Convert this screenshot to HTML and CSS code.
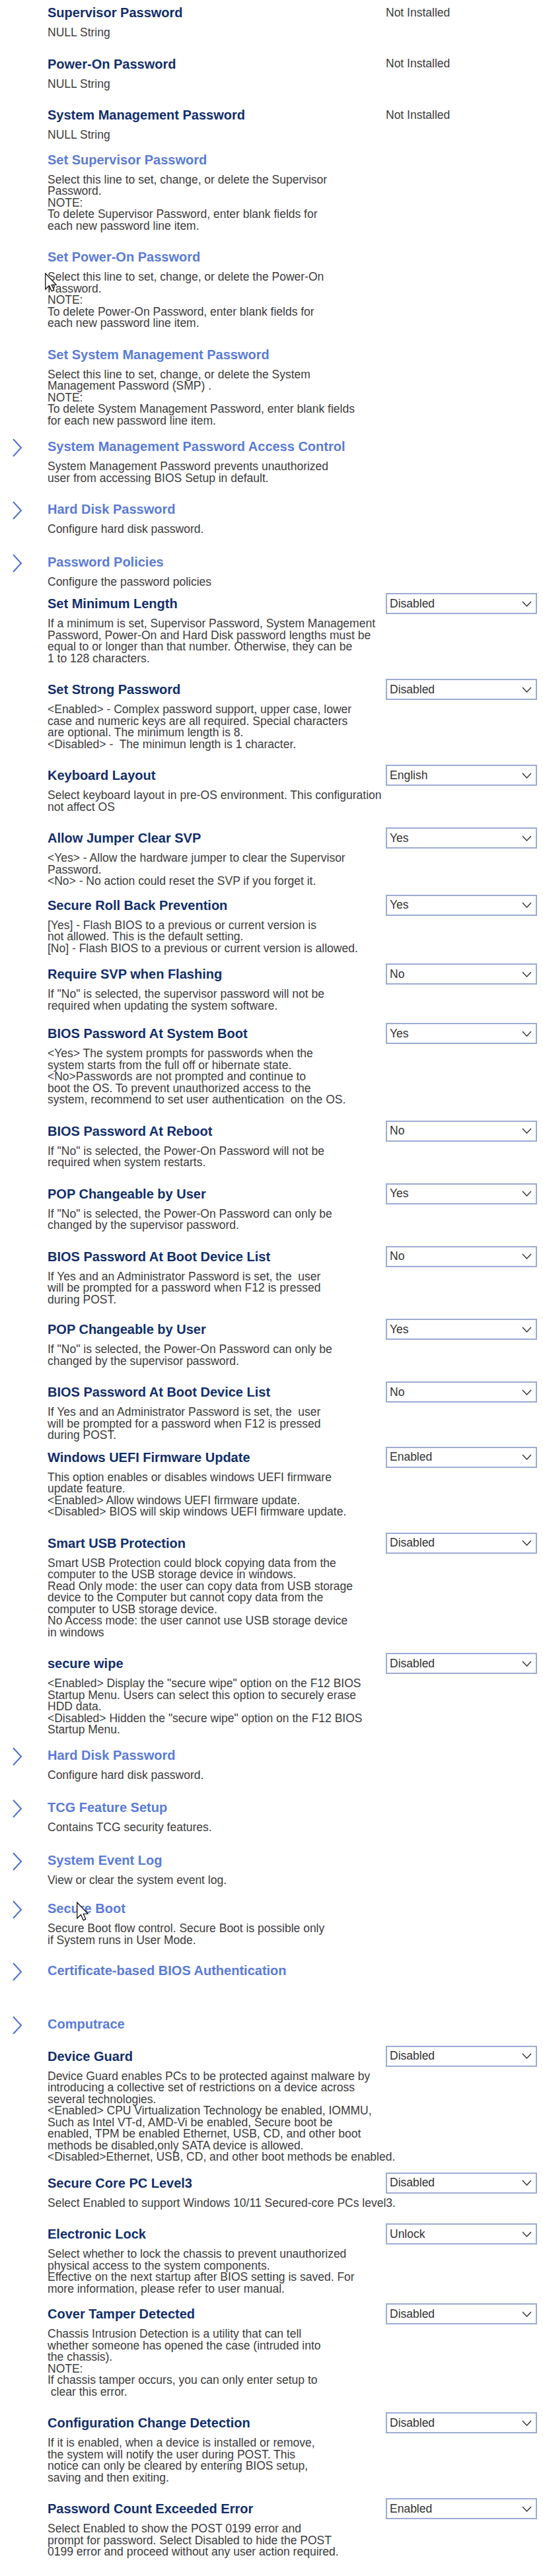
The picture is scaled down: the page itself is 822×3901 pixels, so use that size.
FILE: index.html
```html
<!DOCTYPE html>
<html lang="en">
<head>
<meta charset="utf-8">
<title>Security</title>
<link rel="stylesheet" href="styles.css">
</head>
<body>
<main class="page">

<section class="item">
  <div class="head"><span class="gutter"></span><h3 class="title">Supervisor Password</h3><span class="value">Not Installed</span></div>
  <p class="desc">NULL String</p>
</section>

<section class="item">
  <div class="head"><span class="gutter"></span><h3 class="title">Power-On Password</h3><span class="value">Not Installed</span></div>
  <p class="desc">NULL String</p>
</section>

<section class="item gap-12">
  <div class="head"><span class="gutter"></span><h3 class="title">System Management Password</h3><span class="value">Not Installed</span></div>
  <p class="desc">NULL String</p>
</section>

<section class="item">
  <div class="head"><span class="gutter"></span><h3 class="title link">Set Supervisor Password</h3></div>
  <p class="desc">Select this line to set, change, or delete the Supervisor
Password.
NOTE:
To delete Supervisor Password, enter blank fields for
each new password line item.</p>
</section>

<section class="item">
  <div class="head"><span class="gutter"></span><h3 class="title link">Set Power-On Password</h3></div>
  <p class="desc">Select this line to set, change, or delete the Power-On
Password.
NOTE:
To delete Power-On Password, enter blank fields for
each new password line item.</p>
</section>

<section class="item gap-14">
  <div class="head"><span class="gutter"></span><h3 class="title link">Set System Management Password</h3></div>
  <p class="desc">Select this line to set, change, or delete the System
Management Password (SMP) .
NOTE:
To delete System Management Password, enter blank fields
for each new password line item.</p>
</section>

<section class="item">
  <div class="head"><span class="gutter"><svg class="chev" viewBox="0 0 16 28"><polyline points="2,1 14,14 2,27"/></svg></span><h3 class="title link">System Management Password Access Control</h3></div>
  <p class="desc">System Management Password prevents unauthorized
user from accessing BIOS Setup in default.</p>
</section>

<section class="item gap-24">
  <div class="head"><span class="gutter"><svg class="chev" viewBox="0 0 16 28"><polyline points="2,1 14,14 2,27"/></svg></span><h3 class="title link">Hard Disk Password</h3></div>
  <p class="desc">Configure hard disk password.</p>
</section>

<section class="item gap-8">
  <div class="head"><span class="gutter"><svg class="chev" viewBox="0 0 16 28"><polyline points="2,1 14,14 2,27"/></svg></span><h3 class="title link">Password Policies</h3></div>
  <p class="desc">Configure the password policies</p>
</section>

<section class="item">
  <div class="head"><span class="gutter"></span><h3 class="title">Set Minimum Length</h3><div class="select"><span>Disabled</span><svg class="caret" viewBox="0 0 15 9"><polyline points="1,1 7.5,8 14,1"/></svg></div></div>
  <p class="desc">If a minimum is set, Supervisor Password, System Management
Password, Power-On and Hard Disk password lengths must be
equal to or longer than that number. Otherwise, they can be
1 to 128 characters.</p>
</section>

<section class="item">
  <div class="head"><span class="gutter"></span><h3 class="title">Set Strong Password</h3><div class="select"><span>Disabled</span><svg class="caret" viewBox="0 0 15 9"><polyline points="1,1 7.5,8 14,1"/></svg></div></div>
  <p class="desc">&lt;Enabled&gt; - Complex password support, upper case, lower
case and numeric keys are all required. Special characters
are optional. The minimum length is 8.
&lt;Disabled&gt; -  The minimun length is 1 character.</p>
</section>

<section class="item">
  <div class="head"><span class="gutter"></span><h3 class="title">Keyboard Layout</h3><div class="select"><span>English</span><svg class="caret" viewBox="0 0 15 9"><polyline points="1,1 7.5,8 14,1"/></svg></div></div>
  <p class="desc">Select keyboard layout in pre-OS environment. This configuration
not affect OS</p>
</section>

<section class="item gap-11">
  <div class="head"><span class="gutter"></span><h3 class="title">Allow Jumper Clear SVP</h3><div class="select"><span>Yes</span><svg class="caret" viewBox="0 0 15 9"><polyline points="1,1 7.5,8 14,1"/></svg></div></div>
  <p class="desc">&lt;Yes&gt; - Allow the hardware jumper to clear the Supervisor
Password.
&lt;No&gt; - No action could reset the SVP if you forget it.</p>
</section>

<section class="item gap-14">
  <div class="head"><span class="gutter"></span><h3 class="title">Secure Roll Back Prevention</h3><div class="select"><span>Yes</span><svg class="caret" viewBox="0 0 15 9"><polyline points="1,1 7.5,8 14,1"/></svg></div></div>
  <p class="desc">[Yes] - Flash BIOS to a previous or current version is
not allowed. This is the default setting.
[No] - Flash BIOS to a previous or current version is allowed.</p>
</section>

<section class="item gap-17">
  <div class="head"><span class="gutter"></span><h3 class="title">Require SVP when Flashing</h3><div class="select"><span>No</span><svg class="caret" viewBox="0 0 15 9"><polyline points="1,1 7.5,8 14,1"/></svg></div></div>
  <p class="desc">If "No" is selected, the supervisor password will not be
required when updating the system software.</p>
</section>

<section class="item">
  <div class="head"><span class="gutter"></span><h3 class="title">BIOS Password At System Boot</h3><div class="select"><span>Yes</span><svg class="caret" viewBox="0 0 15 9"><polyline points="1,1 7.5,8 14,1"/></svg></div></div>
  <p class="desc">&lt;Yes&gt; The system prompts for passwords when the
system starts from the full off or hibernate state.
&lt;No&gt;Passwords are not prompted and continue to
boot the OS. To prevent unauthorized access to the
system, recommend to set user authentication  on the OS.</p>
</section>

<section class="item">
  <div class="head"><span class="gutter"></span><h3 class="title">BIOS Password At Reboot</h3><div class="select"><span>No</span><svg class="caret" viewBox="0 0 15 9"><polyline points="1,1 7.5,8 14,1"/></svg></div></div>
  <p class="desc">If "No" is selected, the Power-On Password will not be
required when system restarts.</p>
</section>

<section class="item">
  <div class="head"><span class="gutter"></span><h3 class="title">POP Changeable by User</h3><div class="select"><span>Yes</span><svg class="caret" viewBox="0 0 15 9"><polyline points="1,1 7.5,8 14,1"/></svg></div></div>
  <p class="desc">If "No" is selected, the Power-On Password can only be
changed by the supervisor password.</p>
</section>

<section class="item gap-20">
  <div class="head"><span class="gutter"></span><h3 class="title">BIOS Password At Boot Device List</h3><div class="select"><span>No</span><svg class="caret" viewBox="0 0 15 9"><polyline points="1,1 7.5,8 14,1"/></svg></div></div>
  <p class="desc">If Yes and an Administrator Password is set, the  user
will be prompted for a password when F12 is pressed
during POST.</p>
</section>

<section class="item">
  <div class="head"><span class="gutter"></span><h3 class="title">POP Changeable by User</h3><div class="select"><span>Yes</span><svg class="caret" viewBox="0 0 15 9"><polyline points="1,1 7.5,8 14,1"/></svg></div></div>
  <p class="desc">If "No" is selected, the Power-On Password can only be
changed by the supervisor password.</p>
</section>

<section class="item gap-8">
  <div class="head"><span class="gutter"></span><h3 class="title">BIOS Password At Boot Device List</h3><div class="select"><span>No</span><svg class="caret" viewBox="0 0 15 9"><polyline points="1,1 7.5,8 14,1"/></svg></div></div>
  <p class="desc">If Yes and an Administrator Password is set, the  user
will be prompted for a password when F12 is pressed
during POST.</p>
</section>

<section class="item">
  <div class="head"><span class="gutter"></span><h3 class="title">Windows UEFI Firmware Update</h3><div class="select"><span>Enabled</span><svg class="caret" viewBox="0 0 15 9"><polyline points="1,1 7.5,8 14,1"/></svg></div></div>
  <p class="desc">This option enables or disables windows UEFI firmware
update feature.
&lt;Enabled&gt; Allow windows UEFI firmware update.
&lt;Disabled&gt; BIOS will skip windows UEFI firmware update.</p>
</section>

<section class="item">
  <div class="head"><span class="gutter"></span><h3 class="title">Smart USB Protection</h3><div class="select"><span>Disabled</span><svg class="caret" viewBox="0 0 15 9"><polyline points="1,1 7.5,8 14,1"/></svg></div></div>
  <p class="desc">Smart USB Protection could block copying data from the
computer to the USB storage device in windows.
Read Only mode: the user can copy data from USB storage
device to the Computer but cannot copy data from the
computer to USB storage device.
No Access mode: the user cannot use USB storage device
in windows</p>
</section>

<section class="item gap-13">
  <div class="head"><span class="gutter"></span><h3 class="title">secure wipe</h3><div class="select"><span>Disabled</span><svg class="caret" viewBox="0 0 15 9"><polyline points="1,1 7.5,8 14,1"/></svg></div></div>
  <p class="desc">&lt;Enabled&gt; Display the "secure wipe" option on the F12 BIOS
Startup Menu. Users can select this option to securely erase
HDD data.
&lt;Disabled&gt; Hidden the "secure wipe" option on the F12 BIOS
Startup Menu.</p>
</section>

<section class="item gap-24">
  <div class="head"><span class="gutter"><svg class="chev" viewBox="0 0 16 28"><polyline points="2,1 14,14 2,27"/></svg></span><h3 class="title link">Hard Disk Password</h3></div>
  <p class="desc">Configure hard disk password.</p>
</section>

<section class="item gap-24">
  <div class="head"><span class="gutter"><svg class="chev" viewBox="0 0 16 28"><polyline points="2,1 14,14 2,27"/></svg></span><h3 class="title link">TCG Feature Setup</h3></div>
  <p class="desc">Contains TCG security features.</p>
</section>

<section class="item gap-18">
  <div class="head"><span class="gutter"><svg class="chev" viewBox="0 0 16 28"><polyline points="2,1 14,14 2,27"/></svg></span><h3 class="title link">System Event Log</h3></div>
  <p class="desc">View or clear the system event log.</p>
</section>

<section class="item gap-21">
  <div class="head"><span class="gutter"><svg class="chev" viewBox="0 0 16 28"><polyline points="2,1 14,14 2,27"/></svg></span><h3 class="title link">Secure Boot</h3></div>
  <p class="desc">Secure Boot flow control. Secure Boot is possible only
if System runs in User Mode.</p>
</section>

<section class="item gap-25">
  <div class="head"><span class="gutter"><svg class="chev" viewBox="0 0 16 28"><polyline points="2,1 14,14 2,27"/></svg></span><h3 class="title link">Certificate-based BIOS Authentication</h3></div>
  <p class="desc desc-empty"></p>
</section>

<section class="item gap-17">
  <div class="head"><span class="gutter"><svg class="chev" viewBox="0 0 16 28"><polyline points="2,1 14,14 2,27"/></svg></span><h3 class="title link">Computrace</h3></div>
</section>

<section class="item gap-14">
  <div class="head"><span class="gutter"></span><h3 class="title">Device Guard</h3><div class="select"><span>Disabled</span><svg class="caret" viewBox="0 0 15 9"><polyline points="1,1 7.5,8 14,1"/></svg></div></div>
  <p class="desc">Device Guard enables PCs to be protected against malware by
introducing a collective set of restrictions on a device across
several technologies.
&lt;Enabled&gt; CPU Virtualization Technology be enabled, IOMMU,
Such as Intel VT-d, AMD-Vi be enabled, Secure boot be
enabled, TPM be enabled Ethernet, USB, CD, and other boot
methods be disabled,only SATA device is allowed.
&lt;Disabled&gt;Ethernet, USB, CD, and other boot methods be enabled.</p>
</section>

<section class="item">
  <div class="head"><span class="gutter"></span><h3 class="title">Secure Core PC Level3</h3><div class="select"><span>Disabled</span><svg class="caret" viewBox="0 0 15 9"><polyline points="1,1 7.5,8 14,1"/></svg></div></div>
  <p class="desc">Select Enabled to support Windows 10/11 Secured-core PCs level3.</p>
</section>

<section class="item gap-13">
  <div class="head"><span class="gutter"></span><h3 class="title">Electronic Lock</h3><div class="select"><span>Unlock</span><svg class="caret" viewBox="0 0 15 9"><polyline points="1,1 7.5,8 14,1"/></svg></div></div>
  <p class="desc">Select whether to lock the chassis to prevent unauthorized
physical access to the system components.
Effective on the next startup after BIOS setting is saved. For
more information, please refer to user manual.</p>
</section>

<section class="item">
  <div class="head"><span class="gutter"></span><h3 class="title">Cover Tamper Detected</h3><div class="select"><span>Disabled</span><svg class="caret" viewBox="0 0 15 9"><polyline points="1,1 7.5,8 14,1"/></svg></div></div>
  <p class="desc">Chassis Intrusion Detection is a utility that can tell
whether someone has opened the case (intruded into
the chassis).
NOTE:
If chassis tamper occurs, you can only enter setup to
 clear this error.</p>
</section>

<section class="item">
  <div class="head"><span class="gutter"></span><h3 class="title">Configuration Change Detection</h3><div class="select"><span>Disabled</span><svg class="caret" viewBox="0 0 15 9"><polyline points="1,1 7.5,8 14,1"/></svg></div></div>
  <p class="desc">If it is enabled, when a device is installed or remove,
the system will notify the user during POST. This
notice can only be cleared by entering BIOS setup,
saving and then exiting.</p>
</section>

<section class="item">
  <div class="head"><span class="gutter"></span><h3 class="title">Password Count Exceeded Error</h3><div class="select"><span>Enabled</span><svg class="caret" viewBox="0 0 15 9"><polyline points="1,1 7.5,8 14,1"/></svg></div></div>
  <p class="desc">Select Enabled to show the POST 0199 error and
prompt for password. Select Disabled to hide the POST
0199 error and proceed without any user action required.</p>
</section>

<svg class="cursor cursor-1" viewBox="0 0 12 19"><path d="M0.5,0.5 L0.5,16.5 L4.3,12.9 L6.8,18.5 L9.2,17.4 L6.8,12 L11.5,12 Z"/></svg>
<svg class="cursor cursor-2" viewBox="0 0 12 19"><path d="M0.5,0.5 L0.5,16.5 L4.3,12.9 L6.8,18.5 L9.2,17.4 L6.8,12 L11.5,12 Z"/></svg>

</main>
</body>
</html>
```

FILE: styles.css
```css
html, body {
  margin: 0;
  padding: 0;
  background: #ffffff;
}

body {
  font-family: "Liberation Sans", Arial, Helvetica, sans-serif;
  color: #3c3c3c;
}

.page {
  position: relative;
  width: 822px;
  padding-top: 3px;
  padding-bottom: 20px;
}

.item {
  display: flex;
  flex-direction: column;
  padding-bottom: 22px;
}

.gap-8 { padding-bottom: 8px; }
.gap-11 { padding-bottom: 11px; }
.gap-12 { padding-bottom: 12px; }
.gap-13 { padding-bottom: 13px; }
.gap-14 { padding-bottom: 14px; }
.gap-17 { padding-bottom: 17px; }
.gap-18 { padding-bottom: 18px; }
.gap-20 { padding-bottom: 20px; }
.gap-21 { padding-bottom: 21px; }
.gap-24 { padding-bottom: 24px; }
.gap-25 { padding-bottom: 25px; }

.head {
  display: flex;
  align-items: center;
  height: 32px;
  padding-right: 9px;
}

.gutter {
  width: 72px;
  flex: 0 0 72px;
  display: flex;
  align-items: center;
  padding-left: 18px;
  box-sizing: border-box;
}

.chev {
  width: 16px;
  height: 28px;
  margin-top: 4px;
  fill: none;
  stroke: #4f70d0;
  stroke-width: 2;
}

.title {
  flex: 1;
  margin: 0;
  font-size: 20px;
  font-weight: bold;
  line-height: 32px;
  color: #112e6b;
  white-space: nowrap;
}

.title.link {
  color: #5a7bd6;
}

.value {
  width: 229px;
  font-size: 17.5px;
  color: #3c3c3c;
}

.select {
  box-sizing: border-box;
  width: 229px;
  height: 32px;
  border: 2px solid #9dabd4;
  display: flex;
  align-items: center;
  justify-content: space-between;
  padding: 0 6px 0 4px;
  font-size: 17.5px;
  color: #333333;
  background: #ffffff;
}

.caret {
  width: 15px;
  height: 9px;
  fill: none;
  stroke: #333333;
  stroke-width: 1.4;
}

.desc {
  margin: 6px 0 0 72px;
  font-size: 17.5px;
  line-height: 17.5px;
  white-space: pre;
  color: #3c3c3c;
}

.desc-empty {
  height: 17.5px;
}

.cursor {
  position: absolute;
  width: 18px;
  height: 29px;
  fill: #ffffff;
  stroke: #000000;
  stroke-width: 0.8;
  stroke-linejoin: miter;
}

.cursor-1 {
  left: 68px;
  top: 413px;
}

.cursor-2 {
  left: 116px;
  top: 2880px;
}
```
